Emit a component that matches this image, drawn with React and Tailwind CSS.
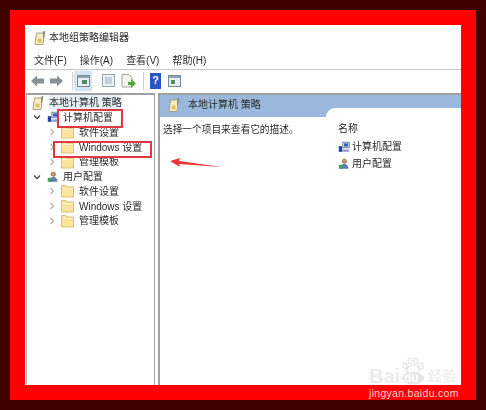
const font = { fontFamily: '"Liberation Sans", "Noto Sans CJK SC", sans-serif' };

function PolicyIcon({ className = "" }) {
  return (
    <svg width="16" height="16" viewBox="0 0 16 16" className={className}>
      <path d="M3 14.5 4.5 3h8L11 14.5z" fill="#f6edc4" stroke="#a8a083" />
      <path d="M11 1.5 13.5 1 12 8l-1 .5z" fill="#8f8f80" />
      <circle cx="7.6" cy="10.5" r="2.2" fill="#e3c060" />
    </svg>
  );
}

function FolderIcon() {
  return (
    <svg width="13" height="14" viewBox="0 0 13 14" className="shrink-0">
      <path d="M.5 1.5h4.5l1 1.5h6.5v10H.5z" fill="#fbe59c" stroke="#dcc070" />
      <path d="M1.5 4.5h10.5" stroke="#fff6d2" />
    </svg>
  );
}

function ComputerIcon() {
  return (
    <svg width="12" height="12" viewBox="0 0 15 14" className="shrink-0">
      <rect x="6" y="1" width="8" height="7" fill="#d9e4f2" stroke="#5a6c9a" />
      <rect x="7.5" y="2.5" width="5" height="4" fill="#2f5fc4" />
      <path d="M1 6h4v7H1z" fill="#1e3f9e" />
      <path d="M5 10h9v3H5z" fill="#8ea0c4" />
    </svg>
  );
}

function UserIcon() {
  return (
    <svg width="12" height="12" viewBox="0 0 15 14" className="shrink-0">
      <circle cx="8" cy="3.5" r="2.8" fill="#c59a6c" stroke="#6b4a30" strokeWidth=".6" />
      <path d="M3 13c0-4 2-6 5-6s5 2 5 6z" fill="#5a7fb0" />
      <path d="M1 8h5v5H1z" fill="#4a9a6a" />
    </svg>
  );
}

function Chevron({ open }) {
  return (
    <svg width="8" height="8" viewBox="0 0 8 8" className="shrink-0">
      {open ? (
        <path d="M1 2.5 4 5.5 7 2.5" fill="none" stroke="#444" strokeWidth="1.3" />
      ) : (
        <path d="M2.5 1 5.5 4 2.5 7" fill="none" stroke="#b0b0b0" strokeWidth="1.2" />
      )}
    </svg>
  );
}

function Group({ icon, label, children }) {
  return (
    <>
      <div className="flex h-[14.8px] items-center pl-[6px]">
        <Chevron open />
        <span className="ml-[6px] mr-[4px] flex">{icon}</span>
        <span>{label}</span>
      </div>
      {children.map((child) => (
        <div key={child} className="flex h-[14.8px] items-center pl-[21px]">
          <Chevron />
          <span className="ml-[5px] mr-[5px] flex">
            <FolderIcon />
          </span>
          <span>{child}</span>
        </div>
      ))}
    </>
  );
}

function Toolbar() {
  return (
    <div className="flex h-[24px] items-center border-t border-[#c8c8c8] pb-[2px] pl-[6px]">
      <svg width="34" height="14" viewBox="0 0 34 14">
        <path d="M0 7 6 1.5V4.5H13V9.5H6V12.5z" fill="#8a9098" />
        <path d="M32 7 26 1.5V4.5H19V9.5H26V12.5z" fill="#8a9098" />
      </svg>
      <div className="ml-[7px] h-[18px] w-px bg-[#cfcfcf]" />
      <div className="ml-[1px] flex h-[20px] w-[18px] items-center justify-center bg-[#d3e6f6]">
        <svg width="13" height="12" viewBox="0 0 13 12">
          <rect x=".5" y=".5" width="12" height="11" fill="#e9edf0" stroke="#7f8a90" />
          <rect x="1" y="1" width="11" height="2" fill="#8fa6b8" />
          <rect x="5" y="5" width="5" height="4" fill="#4f8f5f" />
        </svg>
      </div>
      <svg width="13" height="13" viewBox="0 0 13 13" className="ml-[10px]">
        <rect x=".5" y=".5" width="12" height="12" fill="#eef1f4" stroke="#98a4ae" />
        <rect x="3" y="3" width="7" height="7" fill="#c4d0da" />
      </svg>
      <svg width="15" height="14" viewBox="0 0 15 14" className="ml-[6px]">
        <path d="M1 .5h7l3 3v9.5H1z" fill="#f4f4ee" stroke="#a8a8a0" />
        <path d="M7 8h3V5l5 4.5L10 14v-3H7z" fill="#55a83a" />
      </svg>
      <div className="ml-[7px] h-[18px] w-px bg-[#cfcfcf]" />
      <div className="ml-[6px] flex h-[16px] w-[11px] items-center justify-center bg-[#2a55c8] text-[11px] font-bold leading-none text-white">
        ?
      </div>
      <svg width="13" height="12" viewBox="0 0 13 12" className="ml-[7px]">
        <rect x=".5" y=".5" width="12" height="11" fill="#e9edf0" stroke="#7f8a90" />
        <rect x="1" y="1" width="11" height="2" fill="#8fa6b8" />
        <rect x="3" y="5" width="4" height="4" fill="#4f8f5f" />
      </svg>
    </div>
  );
}

function TreePane() {
  return (
    <div className="w-[129px] shrink-0 border-x border-t-2 border-[#a0a0a0] border-l-[#b4b4b4]">
      <div className="flex h-[15px] items-center pl-[3px]">
        <PolicyIcon />
        <span className="ml-[3px] bg-[#e6f0f8]">本地计算机 策略</span>
      </div>
      <Group icon={<ComputerIcon />} label="计算机配置">
        {["软件设置", "Windows 设置", "管理模板"]}
      </Group>
      <Group icon={<UserIcon />} label="用户配置">
        {["软件设置", "Windows 设置", "管理模板"]}
      </Group>
    </div>
  );
}

function DetailPane() {
  return (
    <div className="ml-[3px] flex min-w-0 flex-1 flex-col border-l-2 border-t-2 border-[#a0a0a0]">
      <div className="flex h-[22px] items-start bg-[#9ab8dc] pl-[6px] pt-[2px]">
        <PolicyIcon />
        <span className="ml-[6px] leading-[16px]">本地计算机 策略</span>
      </div>
      <div className="flex">
        <p className="w-[166px] shrink-0 pl-[3px] pt-[6px] text-[9.7px] leading-[14px]">选择一个项目来查看它的描述。</p>
        <div className="relative flex-1 pl-[12px] pt-[4px]">
          <div className="absolute -top-[9px] left-0 right-0 h-[9px] rounded-tl-[9px] bg-white" />
          <div className="h-[15px] leading-[15px]">名称</div>
          <div className="mt-[2px] flex h-[17px] items-center gap-[2px]">
            <ComputerIcon />
            计算机配置
          </div>
          <div className="flex h-[17px] items-center gap-[2px]">
            <UserIcon />
            用户配置
          </div>
        </div>
      </div>
    </div>
  );
}

export default function App() {
  return (
    <div style={font} className="relative h-[410px] w-[486px] overflow-hidden bg-[#3f0000] p-[10px]">
      <div className="h-[390px] w-[466px] bg-[#fe0000] p-[15px]">
        <div className="flex h-[360px] flex-col bg-white text-[10px] text-[#2a2a2a] blur-[0.5px]">
          <div className="flex h-[25px] items-center pl-[7px]">
            <PolicyIcon />
            <span className="ml-[1px] text-[10px]">本地组策略编辑器</span>
          </div>
          <div className="flex h-[19px] items-center gap-[13px] pl-[9px] pt-[1px]">
            <span>文件(F)</span>
            <span>操作(A)</span>
            <span>查看(V)</span>
            <span>帮助(H)</span>
          </div>
          <Toolbar />
          <div className="flex min-h-0 flex-1 pl-px">
            <TreePane />
            <DetailPane />
          </div>
        </div>
      </div>

      {/* annotations drawn on top of the screenshot */}
      <div className="absolute left-[57px] top-[109px] h-[19px] w-[66px] border-2 border-[#e03a40]" />
      <div className="absolute left-[53px] top-[141px] h-[17px] w-[99px] border-2 border-[#e03a40]" />
      <svg width="54" height="14" viewBox="0 0 54 14" className="absolute left-[170px] top-[158px]">
        <path d="M0 3 10 0 9 3 52 9 9 6 10 9z" fill="#ee3434" />
      </svg>

      {/* baidu watermark */}
      <div className="absolute left-[369px] top-[366px] text-[20px] font-bold leading-[20px] text-[#ececec]">Bai</div>
      <svg width="26" height="28" viewBox="0 0 26 28" className="absolute left-[400px] top-[357px]">
        <g fill="none" stroke="#e2e2e2" strokeWidth="1.2">
          <ellipse cx="13" cy="13" rx="6" ry="5" />
          <ellipse cx="5" cy="9" rx="2" ry="3" />
          <ellipse cx="10" cy="4" rx="2" ry="3" />
          <ellipse cx="16" cy="4" rx="2" ry="3" />
          <ellipse cx="21" cy="9" rx="2" ry="3" />
        </g>
        <ellipse cx="13" cy="21" rx="11" ry="6.5" fill="#e6e6e6" />
      </svg>
      <div className="absolute left-[404px] top-[371px] text-[12px] font-bold leading-[14px] text-white">du</div>
      <div className="absolute left-[428px] top-[368px] text-[14px] leading-[16px] text-[#e8e8e8]">经验</div>
      <div className="absolute left-[369px] top-[386px] text-[10.5px] leading-[14px] tracking-[0.3px] text-[#f5d5d5]">
        jingyan.baidu.com
      </div>
    </div>
  );
}
